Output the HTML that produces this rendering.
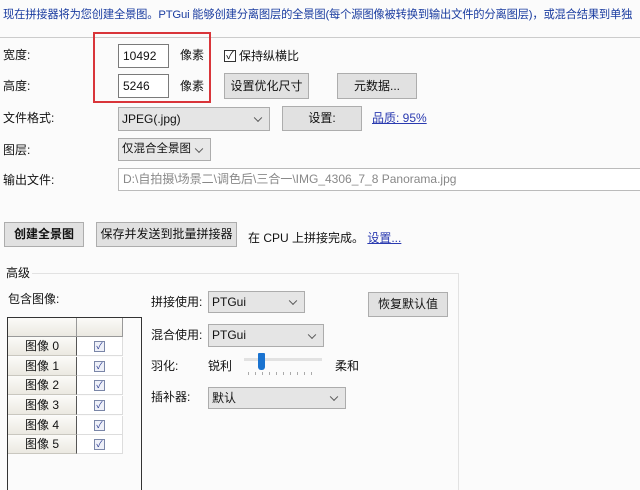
<!DOCTYPE html><html style="overflow:hidden"><head><meta charset="utf-8"><style>
html,body{overflow:hidden}
body{margin:0;width:640px;height:490px;background:#fbfbfb;font-family:"Liberation Sans","Noto Sans CJK SC",sans-serif;font-size:12px;color:#111;position:relative;overflow:hidden}
.a{position:absolute;white-space:nowrap}
.lbl{position:absolute;line-height:14px;white-space:nowrap}
.btn{position:absolute;background:#e1e1e1;border:1px solid #adadad;box-sizing:border-box;text-align:center;white-space:nowrap}
.dd{position:absolute;background:#e5e5e5;border:1px solid #acacac;box-sizing:border-box;padding-left:3px;white-space:nowrap}
.dd:after{content:"";position:absolute;right:8px;top:50%;width:5px;height:5px;border-right:1px solid #555;border-bottom:1px solid #555;transform:translateY(-70%) rotate(45deg)}
.inp{position:absolute;background:#fff;border:1px solid #7a7a7a;box-sizing:border-box;padding-left:4px;white-space:nowrap;overflow:hidden}
.cb{position:absolute;width:11px;height:11px;border:1px solid #7a86a8;background:#eef0f8;box-sizing:border-box;font-size:9px;line-height:9px;text-align:center;color:#2a3a90}
.rh{position:absolute;left:8px;width:69px;height:19px;background:linear-gradient(#fbfbf8,#ebe9e1);border-bottom:1px solid #c9c7bf;border-right:1px solid #555;box-sizing:border-box;text-align:center;line-height:19px}
.rc{position:absolute;left:77px;width:46px;height:19px;background:#fff;border-bottom:1px solid #ddd;border-right:1px solid #ddd;box-sizing:border-box}
</style></head><body>
<div class="a" style="left:3px;top:6px;width:637px;overflow:hidden;color:#1a3ca0;font-size:11.3px;letter-spacing:-0.2px">现在拼接器将为您创建全景图。PTGui 能够创建分离图层的全景图(每个源图像被转换到输出文件的分离图层)，或混合结果到单独</div>
<div class="a" style="left:0;top:37px;width:640px;height:1px;background:#ccc"></div>
<div class="lbl" style="left:3px;top:48px">宽度:</div>
<div class="inp" style="left:118px;top:44px;width:51px;height:24px;line-height:22px">10492</div>
<div class="lbl" style="left:180px;top:48px">像素</div>
<div class="cb" style="left:224px;top:50px;width:12px;height:12px;border-color:#333;background:#fff;color:#111;font-size:11px;line-height:11px">✓</div>
<div class="lbl" style="left:239px;top:49px">保持纵横比</div>
<div class="lbl" style="left:3px;top:79px">高度:</div>
<div class="inp" style="left:118px;top:74px;width:51px;height:24px;line-height:22px">5246</div>
<div class="lbl" style="left:180px;top:79px">像素</div>
<div class="btn" style="left:224px;top:73px;width:85px;height:26px;line-height:24px">设置优化尺寸</div>
<div class="btn" style="left:337px;top:73px;width:80px;height:26px;line-height:24px">元数据...</div>
<div class="a" style="left:93px;top:32px;width:118px;height:71px;border:2px solid #d9353a;box-sizing:border-box"></div>
<div class="lbl" style="left:3px;top:111px">文件格式:</div>
<div class="dd" style="left:118px;top:107px;width:152px;height:24px;line-height:22px">JPEG(.jpg)</div>
<div class="btn" style="left:282px;top:106px;width:80px;height:25px;line-height:23px">设置:</div>
<div class="lbl" style="left:372px;top:111px;color:#2a3ab0;text-decoration:underline">品质: 95%</div>
<div class="lbl" style="left:3px;top:143px">图层:</div>
<div class="dd" style="left:118px;top:138px;width:93px;height:23px;line-height:21px;background:#e8e8e8;font-size:11.5px">仅混合全景图</div>
<div class="lbl" style="left:3px;top:173px">输出文件:</div>
<div class="inp" style="left:118px;top:168px;width:522px;height:23px;line-height:21px;color:#888;border-color:#bbb;border-right:none">D:\自拍摄\场景二\调色后\三合一\IMG_4306_7_8 Panorama.jpg</div>
<div class="btn" style="left:4px;top:222px;width:80px;height:25px;line-height:23px;font-weight:bold">创建全景图</div>
<div class="btn" style="left:96px;top:222px;width:141px;height:25px;line-height:23px">保存并发送到批量拼接器</div>
<div class="lbl" style="left:248px;top:231px">在 CPU 上拼接完成。 <span style="color:#2a3ab0;text-decoration:underline">设置...</span></div>
<div class="lbl" style="left:6px;top:266px">高级</div>
<div class="a" style="left:32px;top:273px;width:426px;height:1px;background:#e2e2e2"></div>
<div class="a" style="left:458px;top:273px;width:1px;height:217px;background:#e2e2e2"></div>
<div class="lbl" style="left:8px;top:292px">包含图像:</div>
<div class="a" style="left:7px;top:317px;width:135px;height:180px;border:1px solid #333;box-sizing:border-box;background:#fbfbfb"></div>
<div class="a" style="left:8px;top:318px;width:69px;height:19px;background:linear-gradient(#fbfbf8,#ebe9e1);border-right:1px solid #999;border-bottom:1px solid #999;box-sizing:border-box"></div>
<div class="a" style="left:77px;top:318px;width:46px;height:19px;background:linear-gradient(#fbfbf8,#ebe9e1);border-right:1px solid #999;border-bottom:1px solid #999;box-sizing:border-box"></div>
<div class="rh" style="top:337px">图像 0</div><div class="rc" style="top:337px"></div><div class="cb" style="left:94px;top:341px">✓</div>
<div class="rh" style="top:357px">图像 1</div><div class="rc" style="top:357px"></div><div class="cb" style="left:94px;top:361px">✓</div>
<div class="rh" style="top:376px">图像 2</div><div class="rc" style="top:376px"></div><div class="cb" style="left:94px;top:380px">✓</div>
<div class="rh" style="top:396px">图像 3</div><div class="rc" style="top:396px"></div><div class="cb" style="left:94px;top:400px">✓</div>
<div class="rh" style="top:416px">图像 4</div><div class="rc" style="top:416px"></div><div class="cb" style="left:94px;top:420px">✓</div>
<div class="rh" style="top:435px">图像 5</div><div class="rc" style="top:435px"></div><div class="cb" style="left:94px;top:439px">✓</div>
<div class="lbl" style="left:151px;top:295px">拼接使用:</div>
<div class="dd" style="left:208px;top:291px;width:97px;height:22px;line-height:20px">PTGui</div>
<div class="lbl" style="left:151px;top:328px">混合使用:</div>
<div class="dd" style="left:208px;top:324px;width:116px;height:23px;line-height:21px">PTGui</div>
<div class="lbl" style="left:151px;top:359px">羽化:</div>
<div class="lbl" style="left:208px;top:359px">锐利</div>
<div class="a" style="left:244px;top:358px;width:78px;height:3px;background:#e2e2e2"></div>
<div class="a" style="left:258px;top:353px;width:7px;height:17px;background:#1a73d0;border-radius:1px 1px 3px 3px"></div>
<div class="a" style="left:248px;top:372px;width:70px;height:3px;background:repeating-linear-gradient(90deg,#aaa 0 1px,transparent 1px 7px)"></div>
<div class="lbl" style="left:335px;top:359px">柔和</div>
<div class="lbl" style="left:151px;top:390px">插补器:</div>
<div class="dd" style="left:208px;top:387px;width:138px;height:22px;line-height:20px">默认</div>
<div class="btn" style="left:368px;top:292px;width:80px;height:25px;line-height:23px">恢复默认值</div>
</body></html>
